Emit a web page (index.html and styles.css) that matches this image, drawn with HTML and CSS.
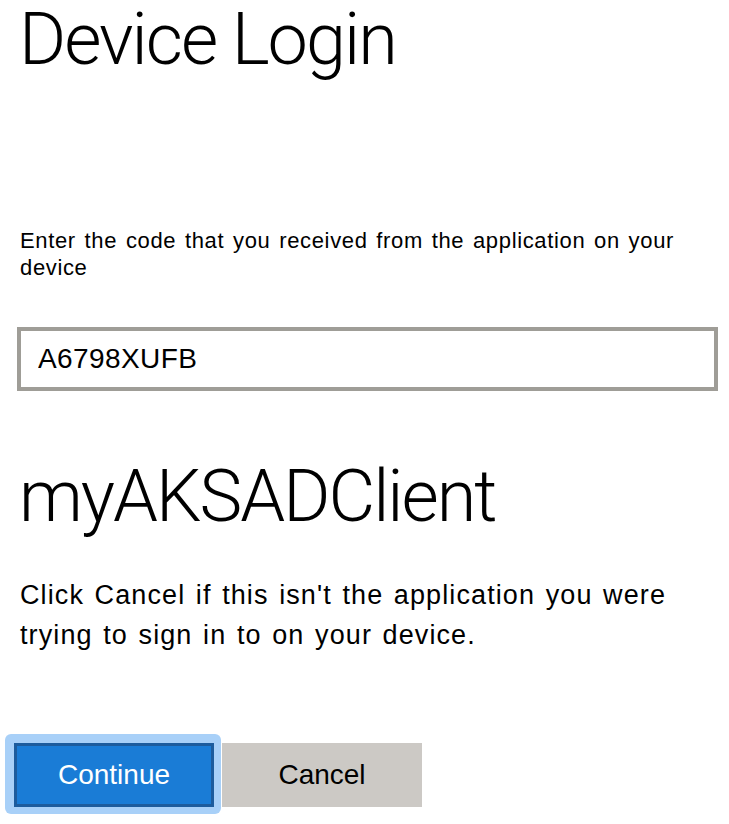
FILE: index.html
```html
<!DOCTYPE html>
<html>
<head>
<meta charset="utf-8">
<title>Device Login</title>
<link rel="stylesheet" href="styles.css">
</head>
<body>
<main class="page">
  <h1 class="title">Device Login</h1>
  <p class="prompt">Enter the code that you received from the application on your device</p>
  <input class="code-input" type="text" value="A6798XUFB">
  <h2 class="app-name">myAKSADClient</h2>
  <p class="notice">Click Cancel if this isn't the application you were trying to sign in to on your device.</p>
  <div class="actions">
    <div class="focus-ring">
      <button class="btn btn-primary" type="button">Continue</button>
    </div>
    <button class="btn btn-secondary" type="button">Cancel</button>
  </div>
</main>
</body>
</html>
```

FILE: styles.css
```css
html, body {
  margin: 0;
  padding: 0;
  background: #ffffff;
}

body {
  font-family: "Liberation Sans", Arial, sans-serif;
  color: #000000;
}

.page {
  padding: 0 11px 12px 14px;
  display: flex;
  flex-direction: column;
  align-items: flex-start;
}

.title,
.app-name {
  font-family: Roboto, "Liberation Sans", sans-serif;
  font-size: 72px;
  font-weight: 300;
  line-height: 72px;
  letter-spacing: -2px;
  padding-right: 6px;
}

.title {
  margin: 4px 0 0 5px;
}

.prompt {
  margin: 151px 0 0 6px;
  font-size: 22px;
  line-height: 27px;
  letter-spacing: 0.65px;
  word-spacing: 2px;
}

.code-input {
  box-sizing: border-box;
  margin: 46px 0 0 3px;
  width: 701px;
  height: 64px;
  border: 4px solid #9f9d97;
  padding: 0 17px;
  font-family: "Liberation Sans", Arial, sans-serif;
  font-size: 28px;
  letter-spacing: 0.4px;
  color: #000000;
  background: #ffffff;
  outline: none;
}

.app-name {
  margin: 70px 0 0 5px;
}

.notice {
  margin: 42px 0 0 6px;
  font-size: 27px;
  line-height: 40px;
  letter-spacing: 1.1px;
  word-spacing: 2px;
}

.actions {
  margin-top: 79px;
  display: flex;
  align-items: flex-start;
}

.focus-ring {
  display: flex;
  padding: 9px 7px 7px 9px;
  margin-left: -9px;
  border-radius: 6px;
  background: #a8d0f8;
}

.btn {
  box-sizing: border-box;
  width: 200px;
  height: 64px;
  border: 3px solid transparent;
  font-family: "Liberation Sans", Arial, sans-serif;
  font-size: 28px;
  padding: 0;
  cursor: pointer;
}

.btn-primary {
  background: #1a7cd6;
  border-color: #1d5c9d;
  color: #ffffff;
  outline: none;
}

.btn-secondary {
  margin: 9px 0 0 1px;
  background: #ccc9c5;
  color: #000000;
}
```
